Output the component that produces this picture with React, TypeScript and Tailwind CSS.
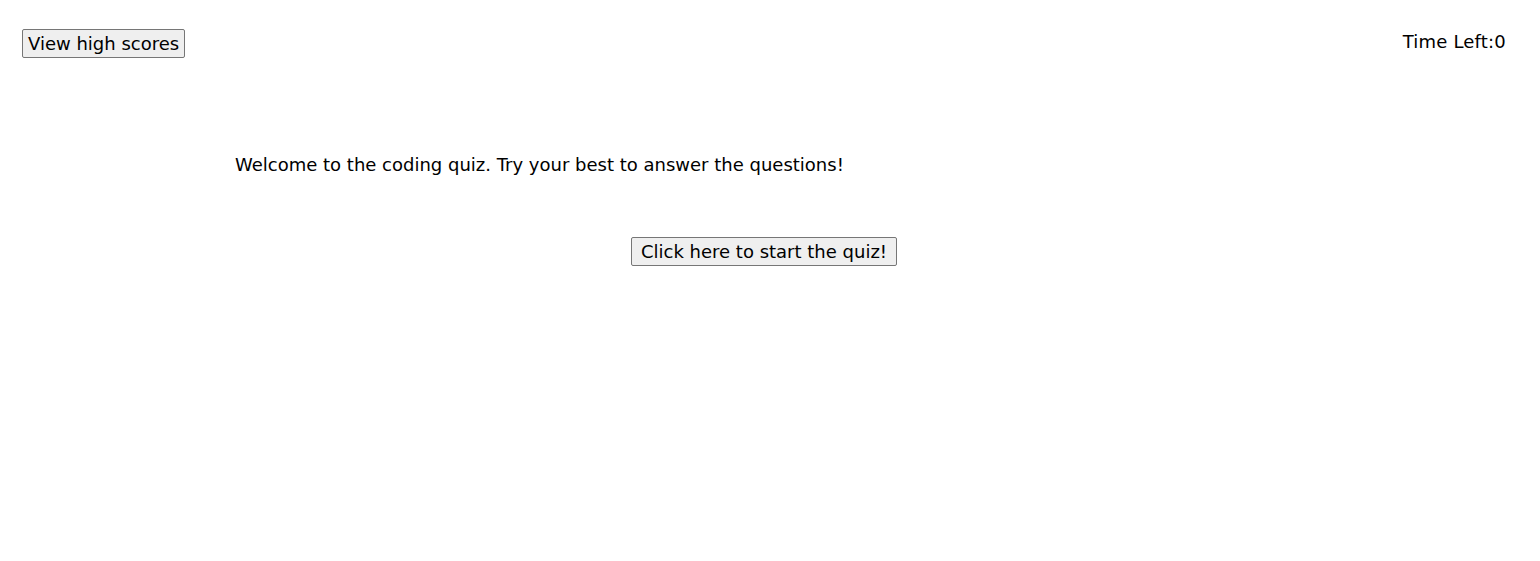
import React from "react";

const font = { fontFamily: '"DejaVu Sans", "Liberation Sans", sans-serif' };

function QuizButton({ children, className = "" }: { children: React.ReactNode; className?: string }) {
	return (
		<button
			className={`rounded-[2px] border border-[#767676] bg-[#efefef] text-[18px] leading-[27px] text-black ${className}`}
		>
			{children}
		</button>
	);
}

export default function App() {
	return (
		<main className="h-[561px] bg-white text-black" style={font}>
			<header className="flex items-start justify-between pl-[22px] pr-[34px] pt-[29px]">
				<QuizButton className="px-[5px]">View high scores</QuizButton>
				<p className="mt-[1px] text-[18px] leading-[24px] tracking-[0.2px]">Time Left:0</p>
			</header>
			<section className="pt-[95px]">
				<p className="pl-[235px] text-[18px] leading-[24px]">
					Welcome to the coding quiz. Try your best to answer the questions!
				</p>
				<div className="mt-[60px] flex justify-center pr-[12px]">
					<QuizButton className="px-[9px]">Click here to start the quiz!</QuizButton>
				</div>
			</section>
		</main>
	);
}
